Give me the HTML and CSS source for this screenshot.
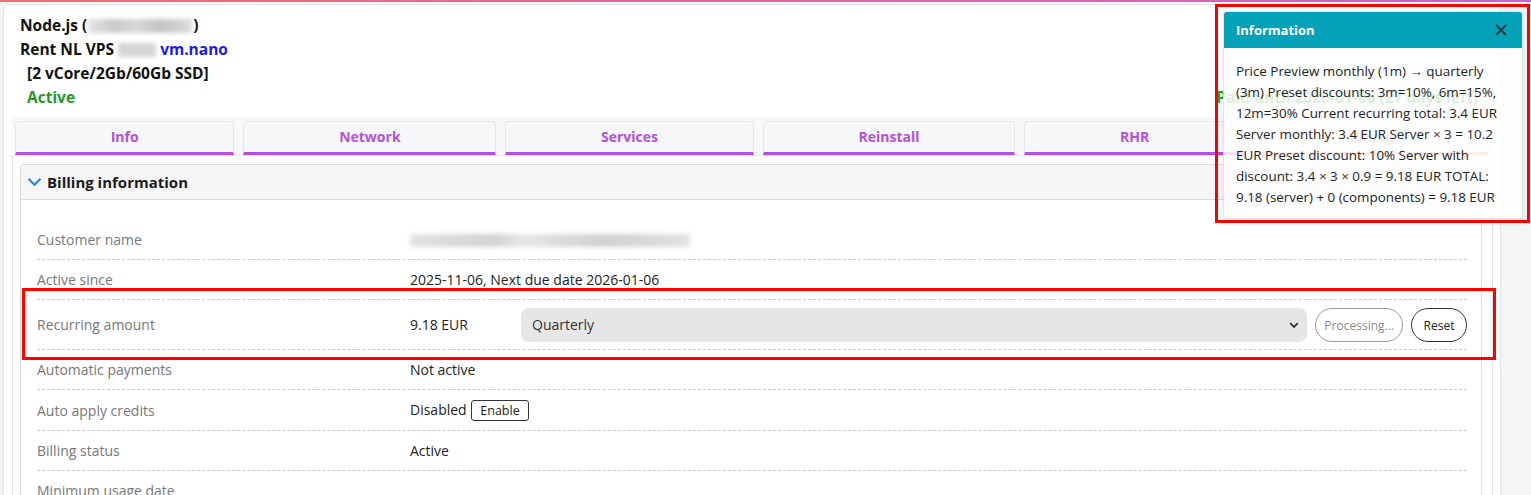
FILE: index.html
```html
<!DOCTYPE html>
<html lang="en">
<head>
    <meta charset="UTF-8">
    <meta name="viewport" content="width=device-width, initial-scale=1.0">
    <title>Node.js - Billing</title>
    <link rel="stylesheet" href="styles.css">
</head>
<body>
    <div class="topline"></div>
    <div class="page">
        <div class="service-head">
            <div class="service-title">
                <div>Node.js (<span class="blur blur-ip"></span>)</div>
                <div>Rent NL VPS <span class="blur blur-id"></span> <a href="#" class="plan">vm.nano</a></div>
                <div class="indent">[2 vCore/2Gb/60Gb SSD]</div>
                <div class="indent status">Active</div>
            </div>
            <div class="paid">Paid until 2026-01-06 (27 days left)</div>
        </div>

        <ul class="tabs">
            <li>Info</li>
            <li>Network</li>
            <li>Services</li>
            <li>Reinstall</li>
            <li>RHR</li>
            <li class="active">Billing</li>
        </ul>

        <div class="tab-panel">
            <div class="card">
                <div class="card-header">
                    <svg class="chevron" width="15" height="10" viewBox="0 0 15 10"><path d="M1.5 1.8 L7.5 7.8 L13.5 1.8" fill="none" stroke="#1e88e5" stroke-width="2.2"/></svg>
                    Billing information
                </div>
                <div class="card-body">
                    <div class="row">
                        <div class="label">Customer name</div>
                        <div class="value"><span class="blur blur-name"></span></div>
                    </div>
                    <div class="row">
                        <div class="label">Active since</div>
                        <div class="value">2025-11-06, Next due date 2026-01-06</div>
                    </div>
                    <div class="row row-recurring">
                        <div class="label">Recurring amount</div>
                        <div class="value period">
                            <span class="amount">9.18 EUR</span>
                            <div class="select">
                                <span>Quarterly</span>
                                <svg width="10" height="7" viewBox="0 0 10 7"><path d="M1.2 1.2 L5 5 L8.8 1.2" fill="none" stroke="#333" stroke-width="1.8"/></svg>
                            </div>
                            <button class="pill" disabled>Processing...</button>
                            <button class="pill pill-dark">Reset</button>
                        </div>
                    </div>
                    <div class="row">
                        <div class="label">Automatic payments</div>
                        <div class="value">Not active</div>
                    </div>
                    <div class="row">
                        <div class="label">Auto apply credits</div>
                        <div class="value">Disabled <button class="small-btn">Enable</button></div>
                    </div>
                    <div class="row">
                        <div class="label">Billing status</div>
                        <div class="value">Active</div>
                    </div>
                    <div class="row">
                        <div class="label">Minimum usage date</div>
                        <div class="value"></div>
                    </div>
                    <div class="row">
                        <div class="label">Invoices</div>
                        <div class="value"></div>
                    </div>
                </div>
            </div>
        </div>
    </div>

    <div class="toast">
        <div class="toast-header">
            <span>Information</span>
            <svg width="12" height="12" viewBox="0 0 12 12"><path d="M1 1 L11 11 M11 1 L1 11" stroke="#163c44" stroke-width="2"/></svg>
        </div>
        <div class="toast-body">
            Price Preview monthly (1m) &rarr; quarterly (3m) Preset discounts: 3m=10%, 6m=15%, 12m=30% Current recurring total: 3.4 EUR Server monthly: 3.4 EUR Server &times; 3 = 10.2 EUR Preset discount: 10% Server with discount: 3.4 &times; 3 &times; 0.9 = 9.18 EUR TOTAL: 9.18 (server) + 0 (components) = 9.18 EUR
        </div>
    </div>

    <div class="mark mark-toast"></div>
    <div class="mark mark-row"></div>
</body>
</html>
```

FILE: styles.css
```css
html, body {
    overflow: hidden;
}

body {
    font-family: "Open Sans", "Noto Sans", sans-serif;
    margin: 0;
    padding: 0;
    background-color: #f3f4f6;
    color: #212529;
}

.topline {
    height: 2px;
    background: linear-gradient(90deg, #f26d6d, #c462d6);
}

.page {
    margin: 2px 30px 0 3px;
    background-color: white;
    border: 1px solid #e1e4e9;
    border-radius: 6px;
    padding: 0 7px 0 8px;
}

.service-head {
    display: flex;
    justify-content: space-between;
    align-items: flex-end;
    padding: 8px 15px 8px 8px;
    font-weight: bold;
    font-size: 15.5px;
    line-height: 24px;
    color: #111;
}

.indent {
    padding-left: 7px;
}

.status {
    color: #1f9a2b;
}

.paid {
    color: #2aa12a;
    font-size: 15.5px;
}

.plan {
    color: #1a1aee;
    text-decoration: none;
}

.blur {
    display: inline-block;
    height: 14px;
    vertical-align: -2px;
    background: linear-gradient(90deg, #e4e4e4, #c9c9c9 25%, #d9d9d9 45%, #c4c4c4 70%, #dcdcdc);
    filter: blur(2px);
}

.blur-ip {
    width: 104px;
    margin: 0 1px;
}

.blur-id {
    width: 38px;
    background: #d6d6d6;
}

.blur-name {
    width: 280px;
    height: 13px;
    background: linear-gradient(90deg, #e2e2e2, #d2d2d2 30%, #e6e6e6 40%, #d0d0d0 70%, #e2e2e2);
}

.tabs {
    list-style: none;
    margin: 0;
    padding: 4px 4px 0 3px;
    display: flex;
    gap: 9px;
    background-color: #f7f8fa;
}

.tabs li {
    flex: 1 1 auto;
    text-align: center;
    background-color: #f6f7f9;
    border: 1px solid #e4e6ea;
    border-bottom: 3px solid #b54fe3;
    border-radius: 4px 4px 0 0;
    color: #b54fe3;
    font-weight: bold;
    font-size: 14px;
    line-height: 30px;
}

.tabs li.active {
    color: #9a9a9a;
    background-color: white;
    border-bottom-color: #f49a86;
}

.tab-panel {
    border: 1px solid #e4e6ea;
    border-bottom: none;
    padding: 8px 10px 0 7px;
}

.card {
    border: 1px solid #dcdcdc;
    border-radius: 3px;
}

.card-header {
    display: flex;
    align-items: center;
    gap: 5px;
    background-color: #f5f5f5;
    border-bottom: 1px solid #dcdcdc;
    padding: 0 6px;
    height: 34px;
    font-weight: bold;
    font-size: 15px;
    color: #1c1c1c;
}

.card-body {
    padding: 20px 14px 0 16px;
}

.row {
    display: grid;
    grid-template-columns: 373px 1fr;
    align-items: center;
    padding: 10px 0 9px;
    border-bottom: 1px dashed #c8c8c8;
    font-size: 14px;
    line-height: 20px;
}

.row-recurring {
    padding: 8px 0 7px;
}

.label {
    color: #777;
}

.value {
    color: #222;
}

.period {
    display: flex;
    align-items: center;
    gap: 8px;
}

.amount {
    width: 103px;
}

.select {
    flex: 1;
    display: flex;
    justify-content: space-between;
    align-items: center;
    height: 34px;
    padding: 0 8px 0 11px;
    background-color: #e6e6e6;
    border-radius: 8px;
    font-size: 14px;
    color: #333;
}

.pill {
    height: 34px;
    padding: 0 8px;
    background: white;
    border: 1px solid #333;
    border-radius: 17px;
    font-family: inherit;
    font-size: 12px;
    color: #222;
}

.pill[disabled] {
    border-color: #9a9a9a;
    color: #8a8a8a;
}

.pill-dark {
    width: 56px;
}

.small-btn {
    margin-left: 1px;
    padding: 1px 8px;
    background: white;
    border: 1px solid #333;
    border-radius: 3px;
    font-family: inherit;
    font-size: 12.5px;
    color: #222;
}

/* floating notification */
.toast {
    position: absolute;
    top: 11px;
    left: 1223px;
    width: 298px;
    border: 1px solid rgba(0, 0, 0, 0.1);
    border-radius: 4px;
    background-color: rgba(255, 255, 255, 0.82);
    box-shadow: 0 2px 8px rgba(0, 0, 0, 0.08);
    overflow: hidden;
}

.toast-header {
    display: flex;
    justify-content: space-between;
    align-items: center;
    height: 36px;
    padding: 0 15px 0 12px;
    background-color: #03a2b8;
    color: white;
    font-weight: bold;
    font-size: 13px;
}

.toast-body {
    padding: 13px 12px 10px;
    font-size: 13.4px;
    line-height: 21px;
    color: #222;
}

/* red annotation boxes */
.mark {
    position: absolute;
    border: 3px solid #f00;
}

.mark-toast {
    top: 4px;
    left: 1215px;
    width: 309px;
    height: 213px;
}

.mark-row {
    top: 288px;
    left: 22px;
    width: 1468px;
    height: 66px;
}
```
